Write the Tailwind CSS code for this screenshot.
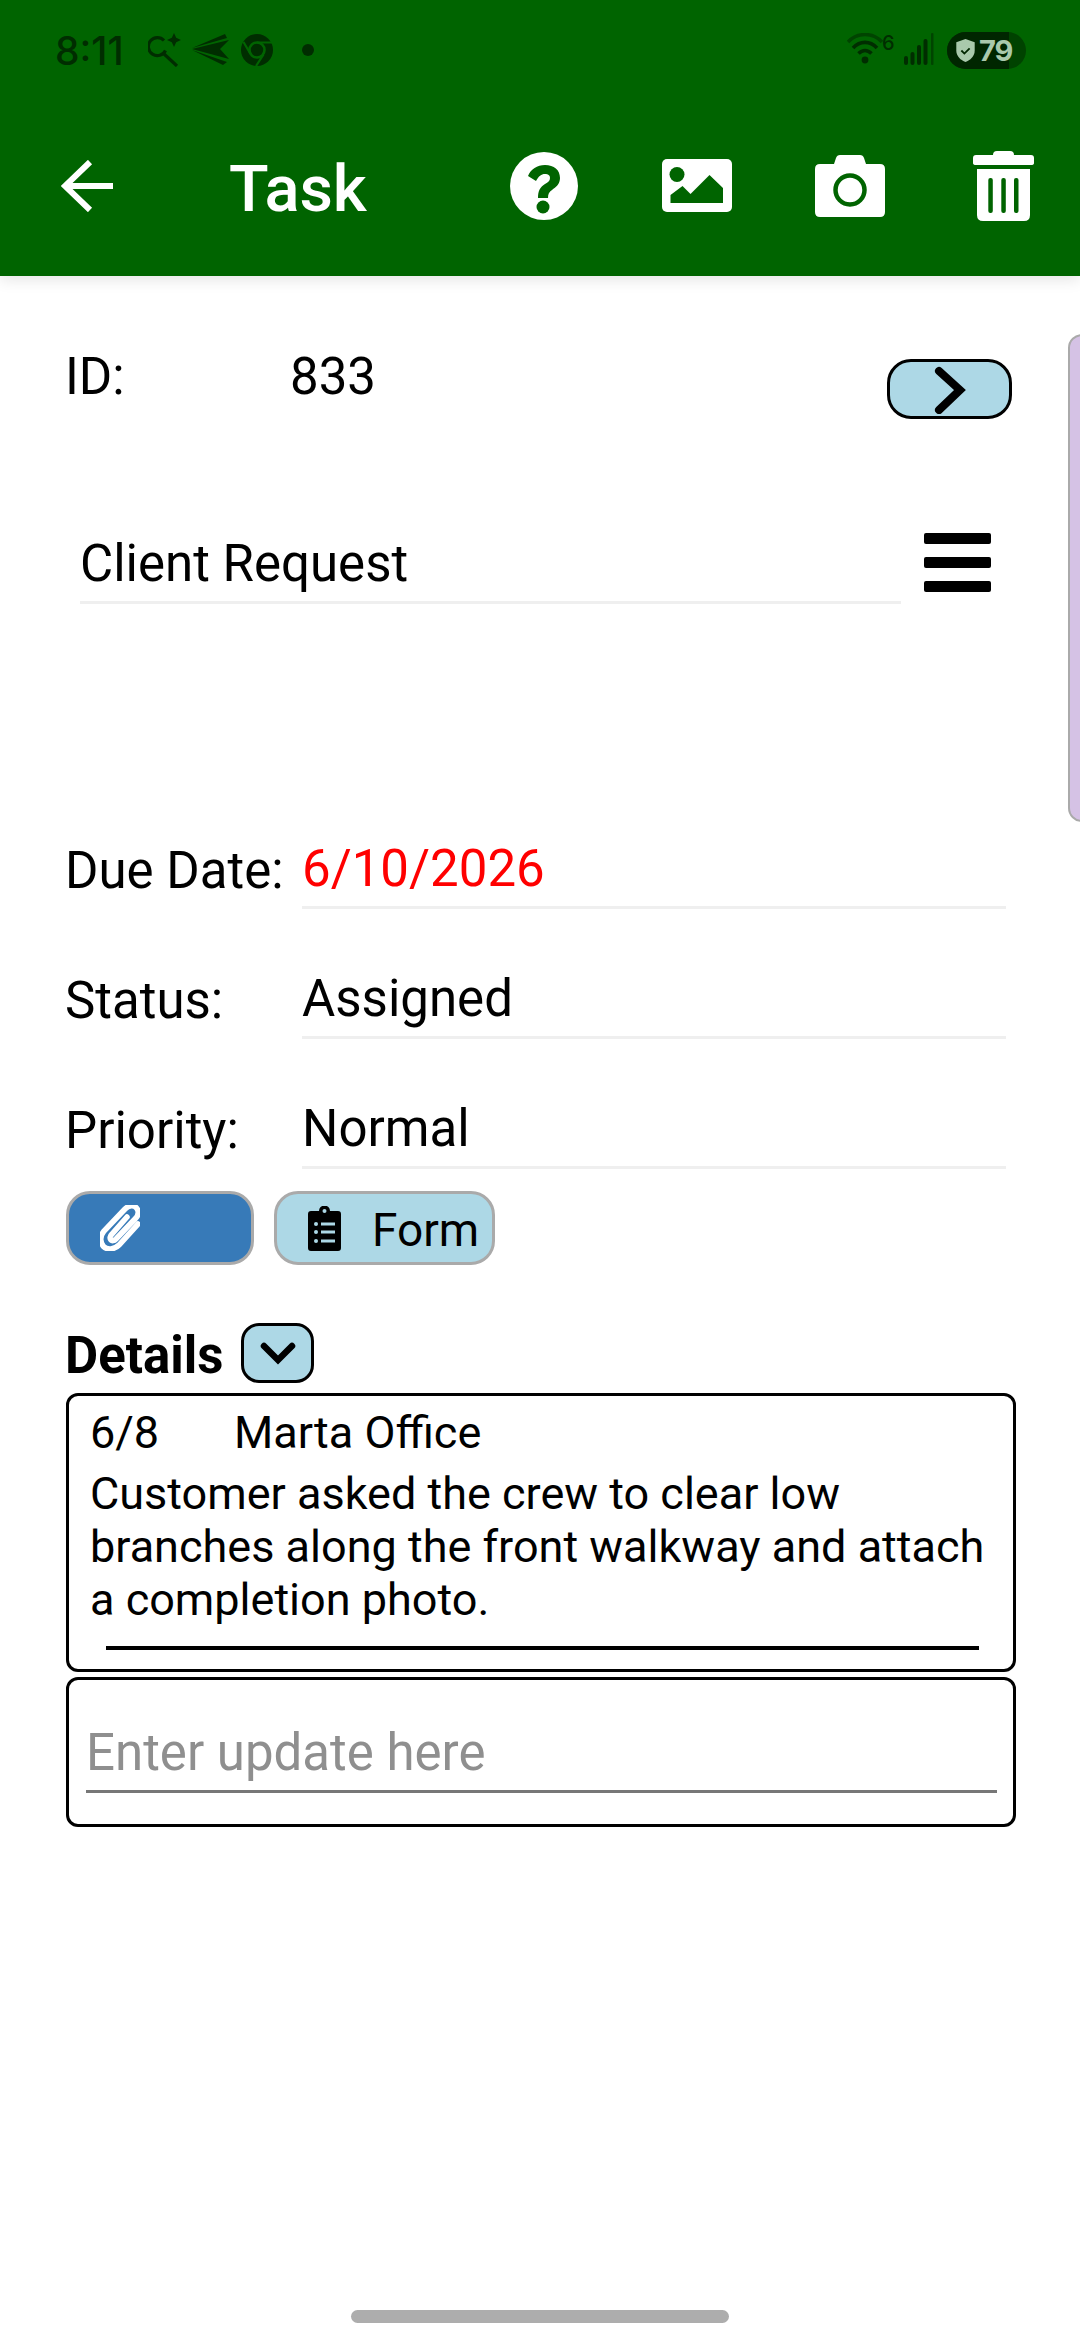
<!DOCTYPE html>
<html>
<head>
<meta charset="utf-8">
<script src="https://cdn.jsdelivr.net/npm/@tailwindcss/browser@4"></script>
</head>
<body class="bg-white">
<div class="relative w-[1080px] h-[2340px] overflow-hidden bg-white font-['Roboto',sans-serif] text-black">
  <header class="h-[276px] bg-[#006400] shadow-[0_4px_14px_rgba(0,0,0,0.10)] relative z-10 flex flex-col">
    <div class="h-[100px] flex items-center justify-between pl-[55px] pr-[54px] text-[#002d00]">
      <div class="flex items-center">
        <span class="font-['Inter',sans-serif] font-medium text-[39px] leading-none w-[93px]">8:11</span>
        <svg class="w-[36px] h-[34px]" viewBox="0 0 36 34" fill="none" stroke="#002d00" stroke-width="3.2"><path d="M16 7.500A9 9 0 1 0 17.500 17.500"/><path d="M15 20l14 13"/><path d="M26 0l2.200 4.800L33 7l-4.800 2.200L26 14l-2.200-4.800L19 7l4.800-2.200z" fill="#002d00" stroke="none"/></svg>
        <svg class="w-[39px] h-[34px] ml-[7px]" viewBox="0 0 39 34" fill="#002d00"><path d="M1 16L38 7 29 16 38 26z"/><path d="M1 15L34 1 36 5z"/><path d="M1 17L32 32 36 29z"/></svg>
        <svg class="w-[32px] h-[32px] ml-[11px]" viewBox="0 0 32 32"><circle cx="16" cy="16" r="16" fill="#002d00"/><circle cx="16" cy="16" r="7.500" fill="none" stroke="#006400" stroke-width="2.600"/><path d="M16 8.500h15M9.500 20L2.500 8M22.500 20.500l-7.500 11.500" stroke="#006400" stroke-width="2.200"/></svg>
        <span class="w-[12px] h-[12px] rounded-full bg-[#002d00] ml-[29px]"></span>
      </div>
      <div class="flex items-center">
        <svg class="w-[36px] h-[34px]" viewBox="0 0 36 34" fill="none" stroke="#002d00"><path d="M1 9C10 -1 26 -1 35 9" stroke="#004400" stroke-width="3.400"/><path d="M6 15C13 7.500 23 7.500 30 15" stroke-width="3.600"/><path d="M11.500 20.500C15.500 16.500 20.500 16.500 24.500 20.500" stroke-width="3.600"/><circle cx="18" cy="27" r="3.400" fill="#002d00" stroke="none"/></svg>
        <span class="font-['Inter',sans-serif] font-medium text-[20px] leading-none self-start mt-[1px] w-[12px] h-[20px] -ml-[1px]">6</span>
        <svg class="w-[32px] h-[34px] ml-[9px]" viewBox="0 0 32 34" fill="#002d00"><rect x="1" y="23" width="4" height="9" rx="2"/><rect x="7.500" y="19" width="4" height="13" rx="2"/><rect x="14" y="12" width="4" height="20" rx="2"/><rect x="20.500" y="6" width="4" height="26" rx="2"/><rect x="28" y="0" width="2.500" height="32" rx="1" fill="#004400"/></svg>
        <div class="relative w-[79px] h-[37px] rounded-full ml-[12px] bg-[#004300] overflow-hidden">
          <div class="absolute left-0 top-0 h-full w-[62px] bg-[#002600]"></div>
          <div class="absolute inset-0 flex items-center pl-[9px]">
            <svg class="w-[19px] h-[23px] shrink-0" viewBox="0 0 20 25"><path d="M10 0l10 3.500v9C20 19 15 23 10 25 5 23 0 19 0 12.500v-9z" fill="#a9c9ac"/><path d="M5.500 12.500l3.300 3.300 5.700-5.700" fill="none" stroke="#002600" stroke-width="2"/></svg>
            <span class="font-['Inter',sans-serif] font-bold text-[29px] leading-none tracking-[-1px] text-[#a9c9ac] ml-[4px]">79</span>
          </div>
        </div>
      </div>
    </div>
    <div class="relative flex-1">
      <svg class="absolute left-[61px] top-[60px] w-[52px] h-[52px]" viewBox="0 0 52 52" fill="none" stroke="#fff" stroke-width="6"><path d="M29 2L4 26l25 24"/><path d="M4 26h48"/></svg>
      <span class="absolute left-[229px] top-[53px] text-[65px] leading-[72px] font-medium text-white">Task</span>
      <svg class="absolute left-[510px] top-[52px] w-[68px] h-[68px]" viewBox="0 0 68 68"><circle cx="34" cy="34" r="34" fill="#fff"/><path d="M18 24c3-7 9-11 17-11 9 0 15 5 15 13 0 6-4 9-8 12-3 2-4 4-4 8H28c0-7 2-11 7-14 3-2 5-3 5-6 0-3-2-4-5-4-4 0-6 2-9 7z" fill="#006400"/><circle cx="33" cy="55" r="6.500" fill="#006400"/></svg>
      <svg class="absolute left-[662px] top-[59px] w-[70px] h-[53px]" viewBox="0 0 70 53"><rect width="70" height="53" rx="5" fill="#fff"/><circle cx="15" cy="15.500" r="7.500" fill="#006400"/><path d="M8.500 44V36L20.500 27 28.500 35 47.500 16 61 29V44z" fill="#006400"/></svg>
      <svg class="absolute left-[815px] top-[55px] w-[70px] h-[62px]" viewBox="0 0 70 62"><path d="M5 9H19L21 3Q22 0 25 0H45Q48 0 49 3L51 9H65Q70 9 70 14V57Q70 62 65 62H5Q0 62 0 57V14Q0 9 5 9z" fill="#fff"/><circle cx="35" cy="35" r="14.500" fill="#fff" stroke="#006400" stroke-width="4.500"/></svg>
      <svg class="absolute left-[973px] top-[51px] w-[61px] h-[70px]" viewBox="0 0 61 70"><path d="M20 4Q20 0 24 0H37Q41 0 41 4h17q3 0 3 3v5q0 2-3 2H3q-3 0-3-2V7q0-3 3-3z" fill="#fff"/><path d="M4 18H57V64q0 6-6 6H10q-6 0-6-6z" fill="#fff"/><rect x="15.300" y="27" width="4.500" height="35" rx="2" fill="#006400"/><rect x="28.300" y="27" width="4.500" height="35" rx="2" fill="#006400"/><rect x="41" y="27" width="4.500" height="35" rx="2" fill="#006400"/></svg>
    </div>
  </header>

  <div class="absolute left-[1068px] top-[334px] w-[40px] h-[488px] bg-[#d5c2e5] border-2 border-[#aaaaaa] rounded-[14px]"></div>

  <main class="pl-[65px] relative">
    <div class="flex items-start h-[249px] pt-[73px]">
      <span class="text-[51px] leading-[56px] w-[225px]">ID:</span>
      <span class="text-[51px] leading-[56px]">833</span>
      <button class="ml-auto mr-[68px] mt-[10px] w-[125px] h-[60px] rounded-[24px] bg-[#add8e6] border-[3px] border-black flex items-center justify-center">
        <svg class="w-[32px] h-[48px] ml-[1px] mt-[1px]" viewBox="0 0 32 48" fill="none" stroke="#000" stroke-width="8" stroke-linecap="round" stroke-linejoin="miter"><path d="M5 5l21 19L5 44"/></svg>
      </button>
    </div>

    <div class="flex items-start h-[316px]">
      <div class="ml-[15px] w-[821px] h-[79px] pt-[5px] border-b-[3px] border-[#efefef] text-[51px] leading-[68px]">Client Request</div>
      <div class="ml-[23px] mt-[8px] w-[67px] flex flex-col gap-[13px]">
        <span class="h-[11px] rounded-[2px] bg-black"></span>
        <span class="h-[11px] rounded-[2px] bg-black"></span>
        <span class="h-[11px] rounded-[2px] bg-black"></span>
      </div>
    </div>

    <div class="flex items-start h-[130px]">
      <span class="text-[51px] leading-[56px] w-[237px] pt-[2px]">Due Date:</span>
      <div class="w-[704px] h-[68px] border-b-[3px] border-[#efefef] text-[#ff0000] text-[51px] leading-[56px]">6/10/2026</div>
    </div>
    <div class="flex items-start h-[130px]">
      <span class="text-[51px] leading-[56px] w-[237px] pt-[2px]">Status:</span>
      <div class="w-[704px] h-[68px] border-b-[3px] border-[#efefef] text-[51px] leading-[56px]">Assigned</div>
    </div>
    <div class="flex items-start h-[90px]">
      <span class="text-[51px] leading-[56px] w-[237px] pt-[2px]">Priority:</span>
      <div class="w-[704px] h-[68px] border-b-[3px] border-[#efefef] text-[51px] leading-[56px]">Normal</div>
    </div>

    <div class="flex gap-[20px] ml-[1px] h-[74px]">
      <button class="w-[188px] h-[74px] rounded-[24px] bg-[#377ab8] border-[3px] border-[#aaaaaa] flex items-center pl-[31px]">
        <svg class="w-[40px] h-[46px]" viewBox="0 0 40 46" fill="none" stroke="#fff" stroke-width="5.500" stroke-linecap="round"><path d="M38 19L19 40C14 45 7 45 3.500 41.500 0 37 0 31 4 26L25 4C29 0 34 0 36.500 3 39 6 39 10 35 14L16 34C14 36 12 36 11 35 9.500 33.500 10 31 12 29L27 12"/></svg>
      </button>
      <button class="w-[221px] h-[74px] rounded-[24px] bg-[#add8e6] border-[3px] border-[#aaaaaa] flex items-center pl-[31px]">
        <svg class="w-[33px] h-[45px] shrink-0" viewBox="0 0 33 45"><path d="M3 5H11a5.500 5.500 0 0 1 11 0H30q3 0 3 3V42q0 3-3 3H3q-3 0-3-3V8q0-3 3-3z" fill="#000"/><circle cx="16.500" cy="5" r="2" fill="#add8e6"/><circle cx="8" cy="18" r="2" fill="#add8e6"/><circle cx="8" cy="26" r="2" fill="#add8e6"/><circle cx="8" cy="35" r="2" fill="#add8e6"/><rect x="13" y="16.500" width="14" height="3" fill="#add8e6"/><rect x="13" y="24.500" width="14" height="3" fill="#add8e6"/><rect x="13" y="33.500" width="14" height="3" fill="#add8e6"/></svg>
        <span class="text-[46px] leading-[56px] ml-[31px] mt-[4px]">Form</span>
      </button>
    </div>

    <div class="flex items-center h-[60px] mt-[58px]">
      <span class="text-[51px] leading-[60px] font-bold mt-[5px]">Details</span>
      <button class="ml-[18px] w-[73px] h-[60px] rounded-[18px] bg-[#add8e6] border-[3px] border-black flex items-center justify-center">
        <svg class="w-[36px] h-[23px]" viewBox="0 0 36 23" fill="none" stroke="#000" stroke-width="6.500" stroke-linecap="round"><path d="M4 4l14 14L32 4"/></svg>
      </button>
    </div>

    <div class="ml-[1px] mt-[10px] w-[950px] h-[279px] border-[3px] border-black rounded-[12px] pl-[21px] pr-[20px] pt-[10px] relative">
      <div class="flex text-[45px] leading-[53px]"><span class="w-[144px]">6/8</span><span>Marta Office</span></div>
      <p class="text-[45px] leading-[53px] mt-[8px]">Customer asked the crew to clear low branches along the front walkway and attach a completion photo.</p>
      <div class="absolute left-[37px] right-[34px] top-[250px] h-[4px] bg-black"></div>
    </div>

    <div class="ml-[1px] mt-[5px] w-[950px] h-[150px] border-[3px] border-black rounded-[12px] pl-[17px] pr-[16px] pt-[44px]">
      <div class="h-[69px] border-b-[3px] border-[#777777] text-[51px] leading-[58px] text-[#8f8f8f]">Enter update here</div>
    </div>
  </main>

  <div class="absolute left-[351px] top-[2310px] w-[378px] h-[13px] rounded-full bg-[#adadad]"></div>
</div>
</body>
</html>
